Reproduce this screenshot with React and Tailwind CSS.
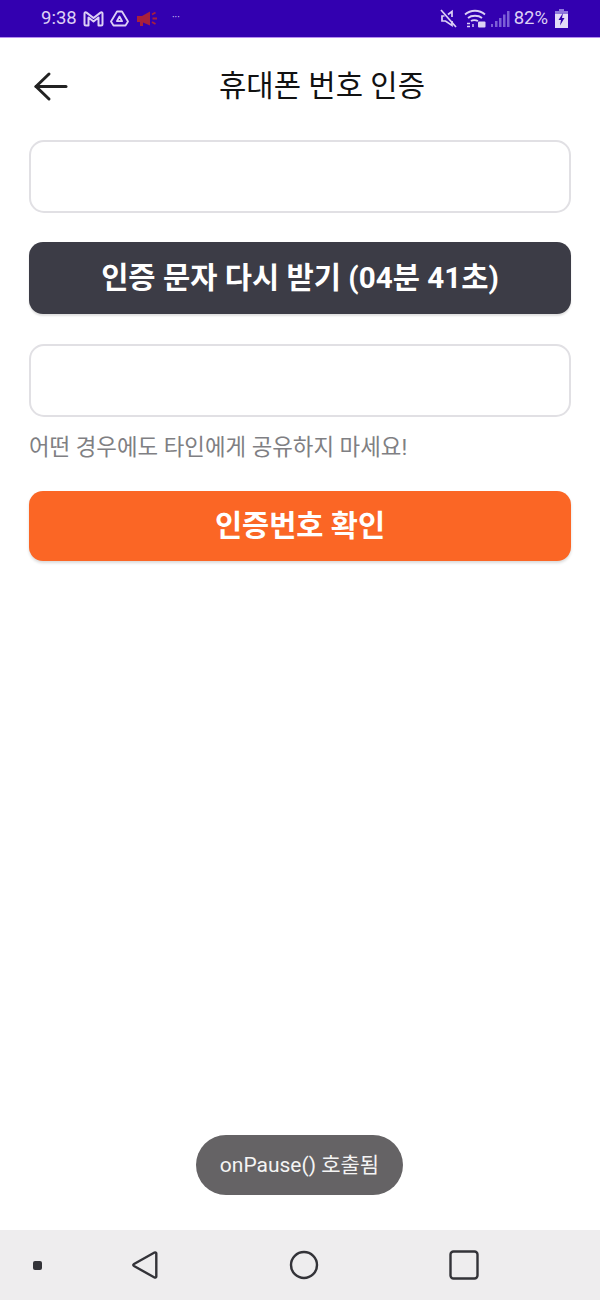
const font = { sans: "font-['Roboto','Noto_Sans_CJK_KR',sans-serif]" }

function StatusLeft() {
  return (
    <div className="flex items-center pl-[41px]">
      <span className="w-[36px] text-[18.5px] leading-none whitespace-nowrap text-[#ddd0f5]">9:38</span>
      {/* gmail */}
      <svg className="ml-[6px]" width="21" height="16" viewBox="0 0 21 16" fill="none" stroke="#ddd0f5" strokeWidth="2" strokeLinejoin="round">
        <path d="M1.500 2.500C1.500 1.500 2.500 1 3.500 1.600L10.500 7l7-5.400c1-.6 2-.1 2 .9V13a1.500 1.500 0 0 1-1.500 1.500H15.500V6.500l-5 4-5-4v8H3A1.500 1.500 0 0 1 1.500 13Z" />
      </svg>
      {/* drive */}
      <svg className="ml-[6px]" width="19" height="17" viewBox="0 0 19 17" fill="none" stroke="#ddd0f5" strokeWidth="1.800" strokeLinejoin="round">
        <path d="M7 1.500h5l6 10-2.500 4h-12L1 11.500Z" />
        <path d="M9.500 6.500l2.600 4.600H6.900Z" />
      </svg>
      {/* megaphone */}
      <svg className="ml-[8px]" width="20" height="16" viewBox="0 0 20 16" fill="#a8203c">
        <path d="M0 5h5l8-4.500v14L6 11.500V15H3v-4H0Z" />
        <path d="M15 3.500l3.500-2M15.500 7.500H20M15 11l3.500 2" stroke="#a8203c" strokeWidth="1.800" />
      </svg>
      <span className="ml-[15px] -mt-[2px] text-[10px] leading-none text-[#ddd0f5]">···</span>
    </div>
  )
}

function StatusRight() {
  return (
    <div className="flex items-center pr-[32px]">
      {/* muted */}
      <svg width="18" height="19" viewBox="0 0 18 19" fill="none" stroke="#ddd0f5" strokeWidth="1.700">
        <path d="M1 1l15 17" />
        <path d="M4.500 7H2v5h3.500l6.500 4.500V12M12 8V2.500L8 5.500" />
      </svg>
      {/* wifi lock */}
      <svg className="ml-[6px]" width="22" height="19" viewBox="0 0 22 19" fill="none" stroke="#ddd0f5" strokeWidth="1.800">
        <path d="M1 5.500c5.500-5 14.500-5 20 0" />
        <path d="M4 9c3.500-3 10.500-3 14 0" />
        <path d="M7 12c1.500-1 5-1 7 0" />
        <path d="M3 14.500h3M3 17.500h3M9 15v3" strokeWidth="1.400" />
        <rect x="14" y="12.500" width="7.500" height="6" rx="1" fill="#ddd0f5" stroke="none" />
      </svg>
      {/* signal */}
      <svg className="ml-[5px]" width="19" height="18" viewBox="0 0 19 18" fill="#7d5fd6">
        <rect x="0" y="14" width="2" height="3" />
        <rect x="4" y="11" width="2.500" height="6" />
        <rect x="8" y="8" width="2.500" height="9" />
        <rect x="12" y="4.500" width="2.500" height="12.500" />
        <rect x="16" y="1" width="2.500" height="16" />
      </svg>
      <span className="ml-[4px] text-[18.5px] leading-none whitespace-nowrap text-[#ddd0f5]">82%</span>
      {/* battery */}
      <svg className="ml-[7px]" width="13" height="19" viewBox="0 0 13 19">
        <rect x="4" y="0" width="5" height="2" fill="#8f78dd" />
        <rect x="0" y="2" width="13" height="3" fill="#8f78dd" />
        <rect x="0" y="5" width="13" height="14" fill="#e4dcf8" />
        <path d="M8 4L3.500 11h2.500L5 16.500 9.500 9H7Z" fill="#3300b0" />
      </svg>
    </div>
  )
}

function Input() {
  return <div className="h-[73px] rounded-[15px] border-2 border-[#e1e0e4] bg-white" />
}

export default function App() {
  return (
    <div className={`relative flex h-[1300px] w-[600px] flex-col overflow-hidden bg-white ${font.sans}`}>
      <div className="flex h-[38px] shrink-0 items-center justify-between border-b border-[#b68cf0] bg-[#3300b0]">
        <StatusLeft />
        <StatusRight />
      </div>

      <div className="relative flex h-[96px] shrink-0 items-center justify-center pl-[44px] pb-[1px]">
        <svg className="absolute left-[33px] top-[32px]" width="36" height="32" viewBox="0 0 36 32" fill="none" stroke="#222222" strokeWidth="3" strokeLinecap="round" strokeLinejoin="round">
          <path d="M33 16.500H3" />
          <path d="M16 4L3 16.500 16 29" />
        </svg>
        <h1 className="text-[29.700px] leading-none font-normal text-[#111111]">휴대폰 번호 인증</h1>
      </div>

      <div className="flex flex-col px-[29px] pt-[6px]">
        <Input />
        <button className="mt-[29px] h-[72px] rounded-[14px] bg-[#3c3c46] text-[29.600px] font-bold text-white shadow-[0_2px_2px_rgba(0,0,0,0.12)]">
          인증 문자 다시 받기 (04분 41초)
        </button>
        <div className="mt-[30px]">
          <Input />
        </div>
        <p className="mt-[14px] text-[22.400px] leading-[32px] text-[#7f7f83]">어떤 경우에도 타인에게 공유하지 마세요!</p>
        <button className="mt-[28px] h-[70px] rounded-[14px] bg-[#fb6625] text-[29.500px] font-bold text-white shadow-[0_2px_3px_rgba(0,0,0,0.15)]">
          인증번호 확인
        </button>
      </div>

      {/* toast */}
      <div className="absolute left-[196px] top-[1135px] flex h-[60px] w-[207px] items-center justify-center rounded-full bg-[#656365] pt-[2px] text-[21px] whitespace-nowrap text-[#f4f4f4]">
        onPause() 호출됨
      </div>

      <div className="mt-auto flex h-[70px] shrink-0 items-center bg-[#eeedee] pl-[33px]">
        <div className="h-[9px] w-[9px] rounded-[2px] bg-[#333338]" />
        <svg className="ml-[90px]" width="26" height="30" viewBox="0 0 26 30" fill="none" stroke="#333338" strokeWidth="2.400" strokeLinejoin="round">
          <path d="M22.500 2.500c.8-.4 1.800 0 1.800 1V26.500c0 1-1 1.400-1.800 1L2 16c-1-.6-1-1.400 0-2Z" />
        </svg>
        <svg className="ml-[131px]" width="30" height="30" viewBox="0 0 30 30" fill="none" stroke="#333338" strokeWidth="2.400">
          <circle cx="15" cy="15" r="13" />
        </svg>
        <svg className="ml-[130px]" width="30" height="30" viewBox="0 0 30 30" fill="none" stroke="#333338" strokeWidth="2.400">
          <rect x="1.500" y="1.500" width="27" height="27" rx="3" />
        </svg>
      </div>
    </div>
  )
}
